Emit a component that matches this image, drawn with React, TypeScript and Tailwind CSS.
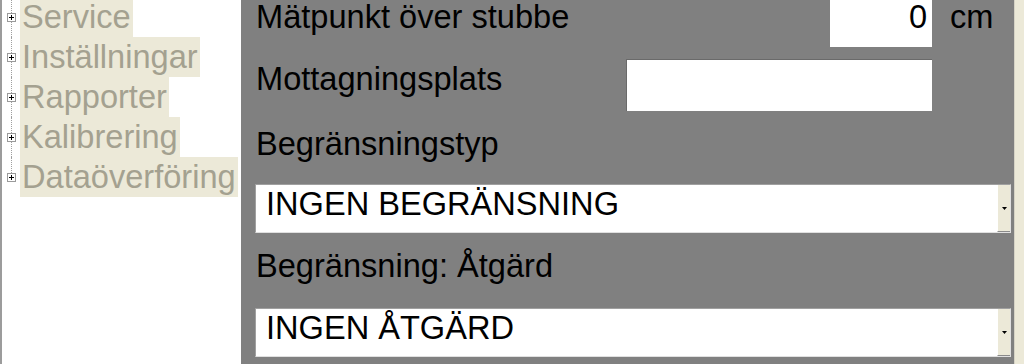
const treeItems = ["Service", "Inställningar", "Rapporter", "Kalibrering", "Dataöverföring"];

function PlusBox() {
  return (
    <div className="w-[9px] h-[9px] border border-[#9a9a9a] bg-white flex items-center justify-center shrink-0">
      <svg width="5" height="5" viewBox="0 0 5 5">
        <rect x="0" y="2" width="5" height="1" fill="#000" />
        <rect x="2" y="0" width="1" height="5" fill="#000" />
      </svg>
    </div>
  );
}

function Dropdown({ value }: { value: string }) {
  return (
    <div className="ml-[-1px] w-[756px] h-[49px] flex bg-white border-t border-l border-[#a0a0a0] border-b border-r border-b-[#e0e0e0] border-r-[#e0e0e0]">
      <div className="flex-1 pl-[10px] pt-[3px] text-[32.6px] leading-[32px] text-black whitespace-nowrap">{value}</div>
      <div className="w-[13px] h-full bg-[#ece9d8] border-l border-l-white border-b border-b-[#8a8a8a] flex items-center justify-center">
        <svg width="5" height="3" viewBox="0 0 5 3">
          <polygon points="0,0 5,0 2.5,3" fill="#000" />
        </svg>
      </div>
    </div>
  );
}

export default function App() {
  return (
    <div className="w-[1024px] h-[364px] overflow-hidden flex bg-white font-['Liberation_Sans',Arial,sans-serif]">
      {/* Trädmeny */}
      <div className="w-[241px] h-full bg-white border-l-2 border-[#9c9c9c] shrink-0">
        <div className="flex flex-col mt-[-3px]">
          {treeItems.map((item, i) => (
            <div key={item} className="h-[40px] flex">
              <div className="w-[18px] flex flex-col items-center shrink-0">
                <div className="flex-1 border-l border-dotted border-[#a0a0a0]" />
                <PlusBox />
                <div className={`flex-1 border-l border-dotted ${i === treeItems.length - 1 ? "border-transparent" : "border-[#a0a0a0]"}`} />
              </div>
              <div className="h-full bg-[#ece9d8] pl-[2px] pr-[2px] pt-[4px] text-[32.6px] leading-[32px] text-[#a4a190] whitespace-nowrap">
                {item}
              </div>
            </div>
          ))}
        </div>
      </div>

      {/* Inställningspanel */}
      <div className="w-[773px] h-full bg-[#808080] shrink-0 pl-[15px] text-black">
        <div className="flex flex-col mt-[-3px]">
          <div className="h-[50px] flex">
            <div className="w-[574px] mt-[4px] text-[32.6px] leading-[32px] whitespace-nowrap">Mätpunkt över stubbe</div>
            <div className="w-[102px] h-[50px] bg-white pt-[4px] pr-[5px] text-right text-[32.6px] leading-[32px]">0</div>
            <div className="ml-[18px] mt-[4px] text-[32.6px] leading-[32px]">cm</div>
          </div>

          <div className="h-[52px] mt-[12px] flex">
            <div className="w-[370px] mt-[4px] text-[32.6px] leading-[32px] whitespace-nowrap">Mottagningsplats</div>
            <div className="w-[306px] h-[52px] bg-white border-t border-l border-[#6a6a6a]" />
          </div>

          <div className="mt-[17px] text-[32.6px] leading-[32px]">Begränsningstyp</div>
          <div className="mt-[24px]">
            <Dropdown value="INGEN BEGRÄNSNING" />
          </div>

          <div className="mt-[17px] text-[32.6px] leading-[32px]">Begränsning: Åtgärd</div>
          <div className="mt-[26px]">
            <Dropdown value="INGEN ÅTGÄRD" />
          </div>
        </div>
      </div>

      <div className="flex-1 h-full bg-[#ece9d8] border-l border-[#d6d3c6]" />
    </div>
  );
}
